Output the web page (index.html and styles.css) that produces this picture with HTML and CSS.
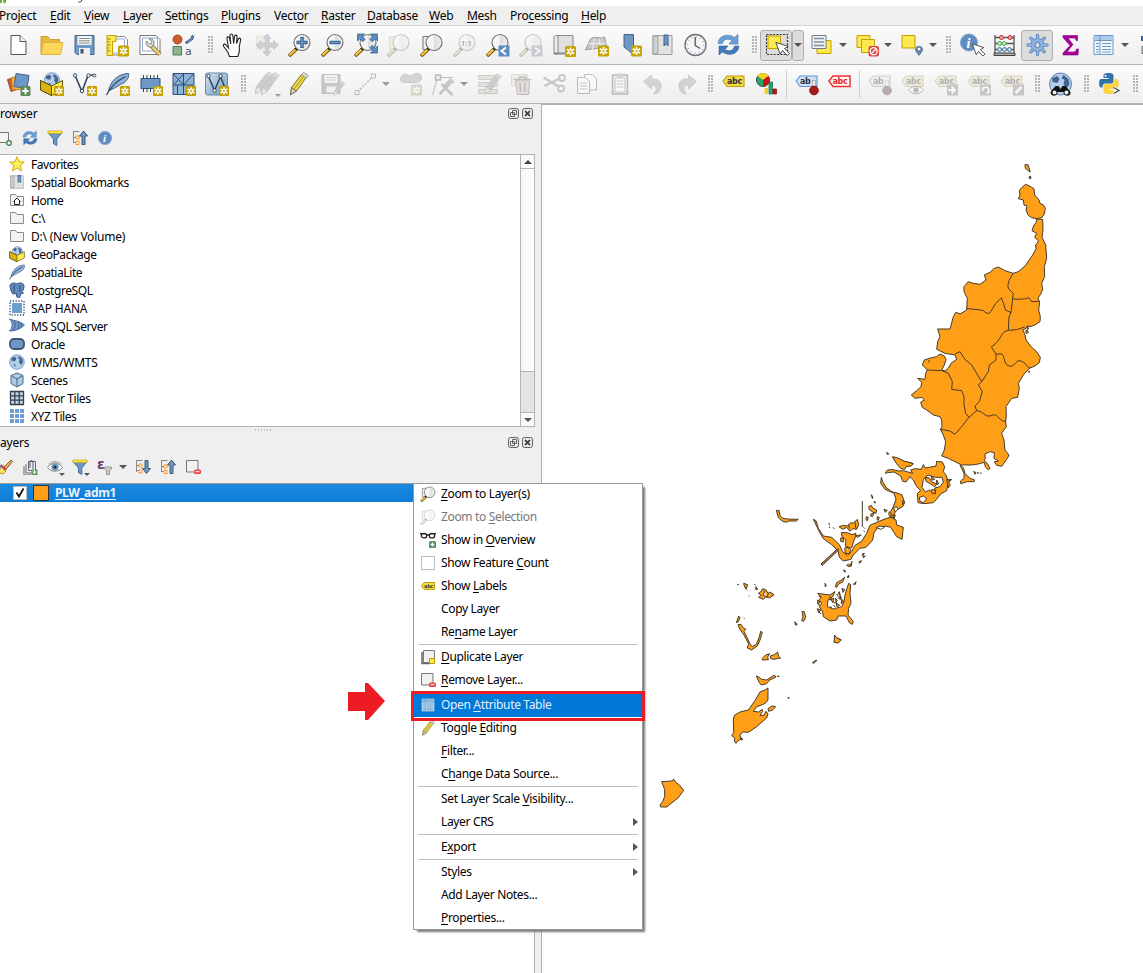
FILE: index.html
```html
<!DOCTYPE html>
<html lang="en">
<head>
<meta charset="utf-8">
<title>QGIS</title>
<link rel="stylesheet" href="styles.css">
</head>
<body>
<svg class="defs" width="0" height="0">
<defs>
<linearGradient id="blueg" x1="0" y1="0" x2="1" y2="1"><stop offset="0" stop-color="#d5e2ee"/><stop offset="1" stop-color="#6d9ac4"/></linearGradient>
<linearGradient id="lens" x1="0" y1="0" x2="1" y2="0"><stop offset="0" stop-color="#fafafa"/><stop offset=".5" stop-color="#f1f1f0"/><stop offset=".52" stop-color="#dededc"/><stop offset="1" stop-color="#efefee"/></linearGradient>
<symbol id="star" viewBox="0 0 12 12"><rect width="11" height="11" x=".5" y=".5" rx="1.500" fill="#c4a000"/><path d="M6 2v8M2.300 3.800l7.400 4.400M2.300 8.200l7.400-4.400" stroke="#fff" stroke-width="1.700"/><circle cx="6" cy="6" r="1" fill="#c4a000"/></symbol>
<symbol id="new" viewBox="0 0 24 24"><path d="M4.500 2.500h9l6 6v13h-15z" fill="#fff" stroke="#555753"/><path d="M13.500 2.500v6h6" fill="#f3f3f3" stroke="#555753"/></symbol>
<symbol id="open" viewBox="0 0 24 24"><path d="M1.500 21V3.500h7l2 3h9.500V9" fill="#e6b93c" stroke="#d0a034"/><path d="M1.500 21.500L4 9.500h19.500l-2.500 12z" fill="#fcd75a" stroke="#e0b040"/></symbol>
<symbol id="save" viewBox="0 0 24 24"><path d="M2.500 2.500h19v19h-17l-2-2z" fill="#6d97c4" stroke="#45658a"/><path d="M5 3h14v9H5z" fill="#f6f6f6"/><path d="M6.500 5.500h11m-11 2.300h11m-11 2.300h11" stroke="#8a8a8a"/><path d="M6.500 15h11v7h-11z" fill="#eeeeec"/><path d="M8 16h3v4.500H8z" fill="#3c5470"/></symbol>
<symbol id="layout" viewBox="0 0 24 24"><path d="M6 3.500h13l3 3V22H6z" fill="#fff" stroke="#888"/><path d="M7 6h12v14H7z" fill="none" stroke="#8fa9d6"/><path d="M1.500 2.500h9v6H7v14H1.500z" fill="#fce94f" stroke="#c4a000"/><path d="M2 6h3M2 9h2M2 12h3M2 15h2M2 18h3" stroke="#907400"/><use href="#star" x="12" y="12" width="12" height="12"/></symbol>
<symbol id="manager" viewBox="0 0 24 24"><path d="M1.500 2.500h16l4 4v15h-20z" fill="#fff" stroke="#777"/><path d="M4 5h15v13H4z" fill="#fff" stroke="#8fa9d6"/><path d="M12 12l9.500 9.500" stroke="#8c7340" stroke-width="4.500"/><path d="M12 12l9.500 9.500" stroke="#e7cf72" stroke-width="2.500"/><path d="M8 8l3 3 2-.5.500-2-3-2.500c3-1 6 1 5 5l-2 3c-4 1-7-2-5.500-6z" fill="#ddd" stroke="#666" stroke-width=".8"/></symbol>
<symbol id="style" viewBox="0 0 24 24"><circle cx="6" cy="6.500" r="4.500" fill="#cd5b2c" stroke="#a64820"/><path d="M13.500 9.500l6-4 1-3 1.500.5-.5 3-6 4.500z" fill="#6d97c4" stroke="#3c5a80"/><path d="M1.500 13.500h8.500v8.500H1.500z" fill="#8ab58f" stroke="#4e7d55"/><text x="13.500" y="22" class="glyph">a</text></symbol>
<symbol id="hand" viewBox="0 0 24 24"><path d="M8 23.500L6.500 19.500 2.300 13.500c-1.300-2.300 1-3.200 2.300-1.500l2.400 3-1.500-9.500c-.2-2 2-2.300 2.500-.3l1.300 5.800L8.500 2.500c0-2 2.500-2 2.800 0l.9 8L13 3.300c.4-1.800 2.700-1.500 2.500.5L15 10.500 16.800 6c.8-1.600 2.900-.8 2.300 1.200L17.800 13.500v5.500l-1.500 4.500z" fill="#fff" stroke="#222" stroke-width="1.100"/></symbol>
<symbol id="panmap" viewBox="0 0 24 24"><path d="M2 3h13v13H2z" fill="#f2e98c" stroke="#c8c48a"/><path d="M12.500 1l4 4.500h-2.500v4.500h5V7.500L24 12l-5 4.500V14h-5v4.500h2.500l-4 4.500-4-4.500H11V14H6.500v2.500L1.500 12l5-4.500V10H11V5.500H8.500z" fill="#7a92ae" stroke="#52687f" stroke-width=".7"/></symbol>
<symbol id="mag" viewBox="0 0 24 24"><path d="M9.500 15.500L1.500 23" stroke="#6b4e12" stroke-width="3.600"/><path d="M8.200 16.400L2 22.200" stroke="#fcc940" stroke-width="2"/><path d="M10.600 14L8 16.500" stroke="#111" stroke-width="3"/><circle cx="14.500" cy="9.500" r="8" fill="url(#lens)" stroke="#777" stroke-width="1.200"/></symbol>
<symbol id="zin" viewBox="0 0 24 24"><use href="#mag"/><path d="M14.500 4v11M9 9.500h11" stroke="#2f5a94" stroke-width="3.400"/><path d="M14.500 5v9M10 9.500h9" stroke="#6d97c4" stroke-width="1.600"/></symbol>
<symbol id="zout" viewBox="0 0 24 24"><use href="#mag"/><path d="M9 9.500h11" stroke="#2f5a94" stroke-width="3.400"/><path d="M10 9.500h9" stroke="#6d97c4" stroke-width="1.600"/></symbol>
<symbol id="zfull" viewBox="0 0 24 24"><use href="#mag"/><path d="M4 1h7L8.700 3.300l3 3-2.400 2.400-3-3L4 8zM24 1v7l-2.300-2.300-3 3-2.400-2.400 3-3L17 1zM24 20h-7l2.300-2.300-3-3 2.400-2.400 3 3L24 13z" fill="#5d8cc0" stroke="#355f93" stroke-width=".8"/></symbol>
<symbol id="zlayer" viewBox="0 0 24 24"><path d="M3.500 3.500h10v13h-10z" fill="#eee" stroke="#777"/><use href="#mag"/></symbol>
<symbol id="zsel" viewBox="0 0 24 24"><path d="M3 3.500h11v13H3z" fill="#efe37a" stroke="#bbb278"/><use href="#mag"/></symbol>
<symbol id="znat" viewBox="0 0 24 24"><use href="#mag"/><text x="8.500" y="12.500" class="glyph-s">1:1</text></symbol>
<symbol id="zlast" viewBox="0 0 24 24"><use href="#mag"/><path d="M13 12.500h11v11H13z" fill="#5d8cc0"/><path d="M20.500 14.500L16 18l4.500 3.500" fill="none" stroke="#fff" stroke-width="2"/></symbol>
<symbol id="znext" viewBox="0 0 24 24"><use href="#mag"/><path d="M13 12.500h11v11H13z" fill="#6a86a8"/><path d="M16.500 14.500L21 18l-4.500 3.500" fill="none" stroke="#fff" stroke-width="2"/></symbol>
<symbol id="newmap" viewBox="0 0 24 24"><path d="M5 2.500h16.500v18H5z" fill="#dfdfdd" stroke="#888a85"/><path d="M2.500 4c0-2 4-2 4 0v17h-4z" fill="#eee" stroke="#888a85"/><path d="M2.500 20.500h14" stroke="#888a85" stroke-width="2"/><use href="#star" x="13" y="12.500" width="12" height="12"/></symbol>
<symbol id="map3d" viewBox="0 0 24 24"><path d="M6 6c5-4 8 1 14-2l2 10c-8 2-12 1-21 3z" fill="#c8c8c6" stroke="#999"/><path d="M4 11c6-2 11 1 17-1M10 5L8 16m7-10l1 10" fill="none" stroke="#f2f2f2"/><use href="#star" x="13" y="12" width="12" height="12"/></symbol>
<symbol id="bm" viewBox="0 0 24 24"><path d="M6.500 1.500h9.500v20l-5-4-4.500-3.500z" fill="#6d97c4" stroke="#45658a"/><use href="#star" x="13" y="12" width="12" height="12"/></symbol>
<symbol id="book" viewBox="0 0 24 24"><path d="M2.500 2.500h19v19h-19z" fill="#e2e2e0" stroke="#a0a29e"/><path d="M2.500 21.500V3h5v17z" fill="#cfcfcd" stroke="#a0a29e"/><path d="M13.500 2h4v11l-2-2.500-2 2.500z" fill="#6d97c4" stroke="#345e93"/></symbol>
<symbol id="clock" viewBox="0 0 24 24"><circle cx="12" cy="12" r="10.500" fill="#f5f5f5" stroke="#6d7073" stroke-width="1.300"/><circle cx="12" cy="12" r="8.300" fill="none" stroke="#9ab" stroke-width="1.500" stroke-dasharray="1 3.345"/><path d="M11.700 4v8.500l5 3" fill="none" stroke="#555" stroke-width="1.300"/></symbol>
<symbol id="refresh" viewBox="0 0 24 24"><path d="M1.500 10.500C2 2 12 0 18 4.500l3.500-3V11h-9l3-3.500C11 5 7 6 6 10.500z" fill="#6c9fd6" stroke="#3f73b0" stroke-width=".6"/><path d="M22.500 13c-.5 8.500-10.500 10.500-16.500 6l-3.500 3v-9h9l-3 3.500c4.500 2.500 8.500 1 9.500-3.500z" fill="#4279ba" stroke="#32639f" stroke-width=".6"/></symbol>
<symbol id="cursor" viewBox="0 0 12 14"><path d="M1 1v10l2.500-2 2.500 4.500 2.200-1.200L6 8h4z" fill="#fff" stroke="#444" stroke-width=".9"/></symbol>
<symbol id="cursorl" viewBox="0 0 14 14"><path d="M.8.800l4 11 2.200-3.400 4.500 4.700 2-2-4.700-4.500 3.500-2z" fill="#fff" stroke="#444" stroke-width=".9"/></symbol>
<symbol id="select" viewBox="0 0 24 24"><path d="M2 1.500h21v20H2z" fill="none" stroke="#333" stroke-width="1.200" stroke-dasharray="2 1.300"/><path d="M3.500 3h12.500v12.500H3.500z" fill="#fce94f" stroke="#c4a000"/><use href="#cursorl" x="10.500" y="8.500" width="15" height="15"/></symbol>
<symbol id="selform" viewBox="0 0 24 24"><path d="M6.500 7.500h14v13h-14z" fill="#fce94f" stroke="#c4a000"/><path d="M1.500 2.500h14v13h-14z" fill="#eef1f4" stroke="#707c88"/><path d="M3.500 5.500h10M3.500 9h10M3.500 12.500h10" stroke="#8091a5" stroke-width="1.600"/></symbol>
<symbol id="desel" viewBox="0 0 24 24"><path d="M1.500 2.500h13v12h-13z" fill="#fce94f" stroke="#c4a000"/><path d="M6 6.500h13v13H6z" fill="#fce94f" stroke="#c4a000"/><rect x="13" y="13" width="10.500" height="10.500" rx="2" fill="#e04848"/><circle cx="18.200" cy="18.200" r="3.500" fill="none" stroke="#fff" stroke-width="1.300"/><path d="M16 20.500l4.500-4.500" stroke="#fff" stroke-width="1.300"/></symbol>
<symbol id="selloc" viewBox="0 0 24 24"><path d="M1.500 2.500h13v12.500h-13z" fill="#fce94f" stroke="#c4a000"/><path d="M18.500 22.500c-3-4-4-5-3.500-7 .8-3 6.200-3 7 0 .5 2-.5 3-3.500 7z" fill="#6885a2" stroke="#4e6a88" stroke-width=".6"/><circle cx="18.500" cy="16" r="1.300" fill="#fff"/></symbol>
<symbol id="ident" viewBox="0 0 24 24"><circle cx="9.500" cy="9.500" r="8.500" fill="#5f8dc2" stroke="#7fa3cc"/><text x="7" y="14.500" class="glyph-i">i</text><use href="#cursorl" x="12" y="10" width="14" height="14"/></symbol>
<symbol id="abacus" viewBox="0 0 24 24"><path d="M2.500 2v20M21.500 2v20M2 4.500h20M2 10.500h20M2 16.500h20" stroke="#555" stroke-width="1.300"/><path d="M1.500 20h21v2.500h-21z" fill="#aaa" stroke="#444"/><g stroke-width="1"><g fill="#f7a6a6" stroke="#c22"><circle cx="9" cy="4.500" r="2"/><circle cx="17.500" cy="4.500" r="2"/></g><g fill="#c9efc9" stroke="#4a4"><circle cx="7" cy="10.500" r="2"/><circle cx="11.500" cy="10.500" r="2"/></g><g fill="#c4dcf2" stroke="#4479a8"><circle cx="7" cy="16.500" r="2"/><circle cx="12" cy="16.500" r="2"/><circle cx="17" cy="16.500" r="2"/></g></g></symbol>
<symbol id="gear" viewBox="0 0 24 24"><g stroke="#5a8ac6" stroke-width="3.400" stroke-linecap="round"><path d="M12 2.500v19M2.500 12h19M5.300 5.300l13.400 13.400M5.300 18.700L18.700 5.300"/></g><circle cx="12" cy="12" r="6.500" fill="#8db2dd" stroke="#5a8ac6"/><g stroke="#8db2dd" stroke-width="1.800" stroke-linecap="round"><path d="M12 2.500v19M2.500 12h19M5.300 5.300l13.400 13.400M5.300 18.700L18.700 5.300"/></g><circle cx="12" cy="12" r="2.600" fill="#dcdcdc" stroke="#4a7cba"/></symbol>
<symbol id="sigma" viewBox="0 0 24 24"><path d="M4.500 2.500h14.500v5h-1.500c-.3-2-1-2.500-3-2.500H9.500l5 6.500-6 7.500h6.500c2 0 2.700-1 3-3H20l-.5 6H4.500v-2l7-7.500-7-8z" fill="#a8009e" stroke="#800078" stroke-width=".6"/></symbol>
<symbol id="table" viewBox="0 0 24 24"><path d="M2.500 2.500h19v19h-19z" fill="#f4f8fc" stroke="#6d97c4"/><path d="M3 3h18v4H3z" fill="#a9cdee"/><path d="M3 7.500h18M8.500 3v18" stroke="#6d97c4"/><path d="M4.500 10.500h3m3 0h9m-15 3h3m3 0h9m-15 3h3m3 0h9m-15 2.500h3m3 0h9" stroke="#6d97c4" stroke-width="1.200"/></symbol>
<symbol id="ruler" viewBox="0 0 24 24"><path d="M1 5.500h20M1.500 3v5" stroke="#345e93" stroke-width="2"/><path d="M1.500 13.500h20v7h-20z" fill="#ddd" stroke="#666"/><path d="M5 14v3m3-3v4" stroke="#444"/></symbol>
<symbol id="dsm" viewBox="0 0 24 24"><path d="M1 7.500L13 4l3.500 11.500-12 4z" fill="#d0572a" stroke="#a64820"/><path d="M5 5.500L17 4l1 13-12 1z" fill="#f5b436" stroke="#c08c1c"/><path d="M9.500 1.500l13 2-2 13-13-2z" fill="#6d97c4" stroke="#3f628c"/><rect x="14" y="14" width="10" height="10" rx="1.500" fill="#5a8c5a"/><path d="M19 15.800v6.400M15.800 19h6.400" stroke="#fff" stroke-width="2"/></symbol>
<symbol id="globe" viewBox="0 0 24 24"><circle cx="12" cy="12" r="11" fill="#b4cde8" stroke="#5b82b0"/><path d="M3.500 6l5.500-2 2 3-2 4-5-1zm11.500-3l5 4 1 5-3 5-3-5 1-4-3-2zM7 15l3 1-1 4z" fill="#426590"/></symbol>
<symbol id="gpkg" viewBox="0 0 24 24"><use href="#globe" x="4" y="0" width="17" height="17"/><path d="M1 8.500L12 14l11-5.500V18l-11 5.500L1 18z" fill="#fce94f" stroke="#504508" stroke-width=".9"/><path d="M1 8.500L12 14v9.500L1 18z" fill="#dcb30e" stroke="#504508" stroke-width=".9"/></symbol>
<symbol id="gpkgn" viewBox="0 0 24 24"><use href="#gpkg"/><use href="#star" x="14" y="13.500" width="11" height="11"/></symbol>
<symbol id="shp" viewBox="0 0 24 24"><path d="M2.500 3.500l7 16 6-16L21.500 3" fill="none" stroke="#33475b" stroke-width="1.600"/><g fill="#fff" stroke="#33475b"><circle cx="2.500" cy="3.500" r="1.700"/><circle cx="9.500" cy="19" r="1.700"/><circle cx="16" cy="3.500" r="1.700"/><circle cx="22" cy="3.500" r="1.500"/></g></symbol>
<symbol id="shpn" viewBox="0 0 24 24"><use href="#shp"/><use href="#star" x="14" y="13.500" width="11" height="11"/></symbol>
<symbol id="feather" viewBox="0 0 24 24"><path d="M3 19C5 9 12 2 23 1.500c1 5-3 9-8 11-3 2-7 4-12 6.500z" fill="#8db2d8" stroke="#3f628c"/><path d="M1 23C5 15 11 9 20 4.500" fill="none" stroke="#33475b" stroke-width="1.300"/></symbol>
<symbol id="feathern" viewBox="0 0 24 24"><use href="#feather"/><use href="#star" x="14" y="13.500" width="11" height="11"/></symbol>
<symbol id="chip" viewBox="0 0 24 24"><path d="M5 3v17M8.500 3v17M12 3v17M15.500 3v17M19 3v17" stroke="#2e4258"/><path d="M2.500 6.500h19v10h-19z" fill="#6d97c4" stroke="#33557d"/><use href="#star" x="14" y="13.500" width="11" height="11"/></symbol>
<symbol id="mesh" viewBox="0 0 24 24"><path d="M1.500 1.500h21v21h-21z" fill="#8db2d8" stroke="#2e4c70"/><path d="M2 13h20M12 2v20M2 2l10 11M12 2L2 13m10 0L22 2M6 13v9" stroke="#2e4c70" fill="none"/><use href="#star" x="14" y="13.500" width="11" height="11"/></symbol>
<symbol id="virt" viewBox="0 0 24 24"><rect x="1" y="1" width="22" height="22" rx="2" fill="url(#blueg)" stroke="#6987a6"/><path d="M4 4.500l6 14 6-14 5 13" fill="none" stroke="#33475b" stroke-width="1.500"/><g fill="#fff" stroke="#33475b"><circle cx="4" cy="4" r="1.700"/><circle cx="10" cy="18.500" r="1.700"/><circle cx="16" cy="4" r="1.700"/></g><use href="#star" x="14" y="13.500" width="11" height="11"/></symbol>
<symbol id="pencil" viewBox="0 0 24 24"><path d="M4 22.500l1-7L15 2.500l5 2.500L10 19z" fill="#ead94a" stroke="#85701a"/><path d="M15 3l2-2.500 5 3L20 6z" fill="#ddd" stroke="#888" stroke-width=".7"/><path d="M7.500 17L17.500 4" stroke="#a89423"/><path d="M5 15.500l5 3.500-6 4z" fill="#d2cdbb" stroke="#555" stroke-width=".7"/></symbol>
<symbol id="pencilg" viewBox="0 0 24 24"><path d="M4 22.500l1-7L15 2.500l5 2.500L10 19z" fill="#8a8480" stroke="#77706c"/><path d="M15 3l2-2.500 5 3L20 6z" fill="#b5a5a0" stroke="#888" stroke-width=".7"/><path d="M5 15.500l5 3.500-6 4z" fill="#ddd" stroke="#666" stroke-width=".7"/></symbol>
<symbol id="pencils" viewBox="0 0 24 24"><use href="#pencilg" x="-3" y="-1" width="24" height="24"/><use href="#pencilg" x="3" y="0" width="24" height="24"/></symbol>
<symbol id="savee" viewBox="0 0 24 24"><path d="M1.500 2.500h18v19h-18z" fill="#777" stroke="#666"/><path d="M4 3h13v8H4z" fill="#eee"/><path d="M6 5.500h9M6 8h9" stroke="#888"/><path d="M6 14.500h10v6H6z" fill="#eee"/><use href="#pencilg" x="11" y="9" width="15" height="15"/></symbol>
<symbol id="line" viewBox="0 0 24 24"><path d="M4 20L20 4" stroke="#555" stroke-width="1.500" stroke-dasharray="2 1.500"/><path d="M1.500 18.500h4v4h-4zM18 2h4v4h-4z" fill="#fff" stroke="#555"/></symbol>
<symbol id="blob" viewBox="0 0 24 24"><path d="M4 3c3-3 6 2 10 0 4-3 9-2 9 2.500 0 5-5 5-9 5H7C1 11 1 6 4 3z" fill="#8f9f9f" stroke="#777"/><use href="#star" x="12" y="12" width="12" height="12"/></symbol>
<symbol id="vertex" viewBox="0 0 24 24"><path d="M1 23L6 5.500h15" fill="none" stroke="#555"/><path d="M4 3h5v5H4z" fill="#ddd" stroke="#555" stroke-width="1.500"/><path d="M8 22L19 11M10 12l11 11" stroke="#777" stroke-width="2.500"/><path d="M13 14l6-6 3 3" fill="none" stroke="#777" stroke-width="3"/></symbol>
<symbol id="multi" viewBox="0 0 24 24"><path d="M2 3.500h19v4H2zM2 10.500h19v4H2zM2 17.500h19v4H2z" fill="#c3c98e" stroke="#858a66"/><use href="#pencilg" x="5" y="0" width="22" height="24"/></symbol>
<symbol id="trash" viewBox="0 0 24 24"><path d="M2 2.500h16v11H2z" fill="#e9e5a8" stroke="#aaa"/><path d="M6 9h14l-1 13.500H8z" fill="#e2b4b0" stroke="#8c4a4a"/><path d="M4 7.500h18M10 7V5h6v2M10.500 11l.5 9m4.500-9l-.5 9" fill="none" stroke="#8c4a4a" stroke-width="1.500"/></symbol>
<symbol id="cut" viewBox="0 0 24 24"><path d="M1 5.500l16 9.500M2 14L18 6" stroke="#777" stroke-width="2.500"/><circle cx="19.500" cy="6" r="3" fill="none" stroke="#777" stroke-width="1.800"/><circle cx="18.500" cy="16.500" r="3" fill="none" stroke="#777" stroke-width="1.800"/></symbol>
<symbol id="copy" viewBox="0 0 24 24"><path d="M9 2.500h8l4 4V18H9z" fill="#fff" stroke="#555"/><path d="M2 5.500h8l4 4v12H2z" fill="#fff" stroke="#555"/><path d="M4 11h8m-8 3h8m-8 3h8" stroke="#777"/></symbol>
<symbol id="paste" viewBox="0 0 24 24"><path d="M4 3h15v19H4z" fill="#ddd" stroke="#555" stroke-width="1.500"/><path d="M6.500 6h10v14h-10z" fill="#fff" stroke="#777"/><path d="M8.500 1.500h6v4h-6z" fill="#999"/><path d="M8 9h7m-7 3h7m-7 3h7" stroke="#777"/></symbol>
<symbol id="undo" viewBox="0 0 24 24"><path d="M2 9.500L10 3v4c8-1 12 5 8 12-1 2-3 3-6 3 4-4 4-9-2-9v4z" fill="#a09a86" stroke="#87827a"/></symbol>
<symbol id="redo" viewBox="0 0 24 24"><use href="#undo" transform="matrix(-1 0 0 1 24 0)"/></symbol>
<symbol id="tag" viewBox="0 0 24 24"><path d="M1.500 9l4-5h17v10.500H5.500z" fill="#f3da48" stroke="#c4a000" stroke-width="1.100"/><text x="5.500" y="12" class="tagtxt">abc</text></symbol>
<symbol id="tagm" viewBox="0 0 16 16"><path d="M1.500 8l2.500-3.500h10.500v7H4z" fill="#f3da48" stroke="#c4a000"/><text x="4" y="10" class="tagmini">abc</text></symbol>
<symbol id="tagr" viewBox="0 0 24 24"><path d="M1.500 9l4-5h17v10.500H5.500z" fill="#fff" stroke="#f03030" stroke-width="1.500"/><text x="5" y="12" class="tagtxt red">abc</text></symbol>
<symbol id="tagb" viewBox="0 0 24 24"><path d="M1.500 9l4-5h17v10.500H5.500z" fill="#cfe2f7" stroke="#5e94d4" stroke-width="1.100"/><text x="5.500" y="12" class="tagtxt">ab</text><path d="M18 8.500h3v9h-3z" fill="#eee" stroke="#888" stroke-width=".6"/><circle cx="19.500" cy="18.500" r="4.300" fill="#aa1818" stroke="#7a0d0d"/></symbol>
<symbol id="tageye" viewBox="0 0 24 24"><use href="#tag"/><path d="M8 18c4-5 11-5 15 0-4 5-11 5-15 0z" fill="#fff" stroke="#555"/><circle cx="15.500" cy="18" r="2.700" fill="#555"/></symbol>
<symbol id="tagmv" viewBox="0 0 24 24"><use href="#tag"/><path d="M13.500 12.500h11v11h-11z" fill="#777"/><path d="M15 18h5m-2-3.500l3.500 3.500-3.500 3.500" stroke="#fff" stroke-width="1.800" fill="none"/></symbol>
<symbol id="tagrot" viewBox="0 0 24 24"><use href="#tag"/><path d="M13.500 12.500h11v11h-11z" fill="#777"/><path d="M16 19a3.200 3.200 0 1 1 4 2.500" stroke="#fff" stroke-width="1.800" fill="none"/></symbol>
<symbol id="taged" viewBox="0 0 24 24"><use href="#tag"/><path d="M13.500 12.500h11v11h-11z" fill="#777"/><path d="M16 21l6-6" stroke="#fff" stroke-width="2.500"/></symbol>
<symbol id="diagram" viewBox="0 0 24 24"><circle cx="8.500" cy="8" r="6.500" fill="#22a86a" stroke="#444"/><path d="M8.500 8L3 4C5.500 0 12 0 14 4z" fill="#f7cf24"/><path d="M8.500 8L14 4c3 4 0 10-5.500 10.500z" fill="#c81414"/><path d="M10 16h3.500v6H10z" fill="#f7cf24"/><path d="M14.500 10h3.500v12h-3.500z" fill="#22a86a" stroke="#146b43" stroke-width=".7"/><path d="M18.500 17h3.500v5h-3.500z" fill="#c81414" stroke="#800" stroke-width=".7"/></symbol>
<symbol id="meta" viewBox="0 0 24 24"><use href="#globe"/><path d="M7 14h3l2 3 2-3h3l5 6c1 5-7 5-7 0h-6c0 5-7 5-7 0z" fill="#111"/><circle cx="6" cy="20.500" r="2" fill="#eee"/><circle cx="18" cy="20.500" r="2" fill="#eee"/></symbol>
<symbol id="python" viewBox="0 0 24 24"><path d="M11 1c4 0 5 1 5 3v5c0 2-1 2.500-3 2.500H8c-2 0-3 1-3 4H3.500C1 15.500 1 7 3.500 7H11V6H6V4c0-2 1-3 5-3z" fill="#3572a5"/><circle cx="8" cy="3.700" r="1" fill="#fff"/><path d="M11 22c-4 0-5-1-5-3v-4c0-2 1-3 3-3h5c2 0 3-1 3-5h2c3 0 3 9 0 10h-8v1h5v1c0 2-1 3-5 3z" fill="#fdd23b"/><path d="M16 15.500l5.500 3-5.500 3" fill="none" stroke="#fff" stroke-width="3"/><path d="M16 15.500l5.500 3-5.500 3" fill="none" stroke="#444" stroke-width="1.300"/></symbol>
<symbol id="funnel" viewBox="0 0 16 16"><path d="M1 2.500h14L9.800 9v6.500l-3.300-1.800V9z" fill="#6d97c4" stroke="#456f9f"/><path d="M1 1h14v2.500H1z" fill="#fce94f" stroke="#c4a000" stroke-width=".7"/></symbol>
<symbol id="collapse" viewBox="0 0 16 16"><path d="M1.500 1v12M1.500 1.500h6m-6 6h3m-3 5h3" stroke="#888" fill="none"/><path d="M4 6h3v3H4zM4 11.500h3v3H4z" fill="#fff" stroke="#f7921e"/><path d="M11.500 1l4 5h-2.500v8.500h-3V6H7.500z" fill="#6d97c4" stroke="#3b5877"/></symbol>
<symbol id="expand" viewBox="0 0 16 16"><path d="M1.500 1v12M1.500 1.500h6m-6 5h3m-3 5h3" stroke="#888" fill="none"/><path d="M4 5h3v3H4zM4 11h3v3H4z" fill="#fff" stroke="#f7921e"/><path d="M11.500 14.500l4-5h-2.500V1.500h-3v8H7.500z" fill="#6d97c4" stroke="#3b5877"/></symbol>
<symbol id="info" viewBox="0 0 16 16"><circle cx="8" cy="8" r="6.600" fill="#5f8dc2" stroke="#88a9cf"/><text x="6" y="12" class="glyph-j">i</text></symbol>
<symbol id="addl" viewBox="0 0 16 16"><path d="M1 2.500h10.500v10H1z" fill="#f5f5f5" stroke="#777"/><circle cx="12" cy="13" r="2.300" fill="#fff" stroke="#4c8a57" stroke-width="1.500"/></symbol>
<symbol id="fav" viewBox="0 0 16 16"><path d="M8 .7l2 5 5.300.4-4.100 3.500 1.400 5.300L8 12l-4.600 2.900 1.400-5.300L.7 6.100 6 5.700z" fill="#fdf05c" stroke="#cfa70e"/></symbol>
<symbol id="folder" viewBox="0 0 16 16"><path d="M1.500 13.500v-11h5l1.500 2h6.500v9z" fill="#f2f2f1" stroke="#8a8c88"/></symbol>
<symbol id="home" viewBox="0 0 16 16"><use href="#folder"/><path d="M4.500 9.500L8 6l3.500 3.500M5.500 9v3.500h5V9" fill="#fff" stroke="#222"/></symbol>
<symbol id="pg" viewBox="0 0 16 16"><path d="M1 3c2-3 5-2 7-1 3-2 7-1 7 2 0 3-1 5-2.500 6l2 1-3 1c0 4-1 4-3 3.500-1-.5-1-2-1-4L4 12C2 10 1 6 1 3z" fill="#5f8dc2" stroke="#33557d"/><path d="M5.500 2.500c-1 3 0 5-.5 8M10.500 3c1 3-.5 5 1 7" fill="none" stroke="#2e4c70"/></symbol>
<symbol id="hana" viewBox="0 0 16 16"><path d="M1 1h14v14H1z" fill="none" stroke="#2e4c70" stroke-width="1.500" stroke-dasharray="1.200 1.600"/><path d="M3 3h10v10H3z" fill="#6d9fd2"/></symbol>
<symbol id="mssql" viewBox="0 0 16 16"><path d="M.5 1c4 4 3 9 0 12 6 0 11-2 15-6C11 3 6 3 .5 1z" fill="#6d97c4" stroke="#456f9f"/><path d="M5 2.500c2 4 1 7-1 10M9 3.500c1.500 3 1 5-.5 7.500M12 5c1 2 .5 3-.5 4.500" stroke="#2e4c70" fill="none" stroke-width=".7"/></symbol>
<symbol id="oracle" viewBox="0 0 16 16"><rect x="1" y="3" width="14" height="10" rx="4" fill="#6d97c4" stroke="#3b5877" stroke-width="1.800"/></symbol>
<symbol id="cube" viewBox="0 0 16 16"><path d="M8 1l6 2.500v8L8 15l-6-3.500v-8z" fill="#aecbe6" stroke="#456780"/><path d="M2 3.500L8 7l6-3.500M8 7v8" stroke="#456780" fill="none"/></symbol>
<symbol id="grid" viewBox="0 0 16 16"><path d="M1 1h14v14H1z" fill="#c3d3e3"/><path d="M1.500 1v14M5.800 1v14M10.200 1v14M14.500 1v14M1 1.500h14M1 5.800h14M1 10.200h14M1 14.500h14" stroke="#33404d" stroke-width="1.300"/></symbol>
<symbol id="xyz" viewBox="0 0 16 16"><path d="M1 3h14M1 8h14M1 13h14" stroke="#6d9fd2" stroke-width="4" stroke-dasharray="4 1"/></symbol>
<symbol id="broom" viewBox="0 0 16 16"><path d="M4 8l5 4-3 3-6-2z" fill="#fce94f" stroke="#d0822e"/><path d="M0 3l5 4-2 4-3 1z" fill="#6d97c4"/><path d="M6 9l3-3 5-5 1.500 1.500L11 8l-3 3z" fill="#e3b56c" stroke="#8d5826"/><path d="M4 6l5 5" stroke="#d23c3c" stroke-width="2"/></symbol>
<symbol id="group" viewBox="0 0 16 16"><path d="M6.500 2.500h7v9h-7z M4 5v9h7M2 7v9h7" fill="none" stroke="#666"/><path d="M8 9V3c0-2 3-2 3 0v7" fill="none" stroke="#345e93"/><path d="M9.500 10.500h6v6h-6z" fill="#5a9c5a"/><path d="M12.500 11v4M10.500 13h4" stroke="#fff"/></symbol>
<symbol id="eye" viewBox="0 0 16 16"><path d="M.5 8.500c4-6 11-6 15 0-4 5-11 5-15 0z" fill="#fff" stroke="#888"/><circle cx="8" cy="8" r="3.700" fill="#6d97c4"/><circle cx="8" cy="8" r="1.500" fill="#223"/><path d="M1 5.500c4-4 10-4 14 0" fill="none" stroke="#aaa"/></symbol>
<symbol id="eps" viewBox="0 0 16 16"><text x="0" y="10" class="eps">ε</text><path d="M7.500 8h7v2l-2 1.500v4h-3v-4l-2-1.500z" fill="#ccc" stroke="#999"/></symbol>
<symbol id="rem" viewBox="0 0 16 16"><path d="M1.500 1.500h11.500v11.500H1.500z" fill="#f1f1f0" stroke="#777"/><rect x="9" y="10.500" width="7" height="4.500" rx="1.500" fill="#e8474a"/><path d="M10.500 12.700h4" stroke="#fff"/></symbol>
<symbol id="dup" viewBox="0 0 16 16"><path d="M2 3v11.500h8" fill="none" stroke="#666" stroke-width="1.500"/><path d="M3.500 1.500h11v12h-11z" fill="#f1f1f0" stroke="#777"/><path d="M9.500 9.500h5v5h-5z" fill="#fce94f" stroke="#c4a000"/></symbol>
<symbol id="glasses" viewBox="0 0 16 16"><path d="M0 1.500l2 .5M16 1.500L14 2M6.500 3h3" fill="none" stroke="#222" stroke-width="1.300"/><ellipse cx="4" cy="3.700" rx="2.700" ry="2.200" fill="#fff" stroke="#222" stroke-width="1.300"/><ellipse cx="12" cy="3.700" rx="2.700" ry="2.200" fill="#fff" stroke="#222" stroke-width="1.300"/><rect x="9" y="9" width="7" height="7" rx="1.500" fill="#4f8f5a"/><path d="M12.500 10.500v4M10.500 12.500h4" stroke="#fff" stroke-width="1.400"/></symbol>
<symbol id="check" viewBox="0 0 16 16"><path d="M1.500 1.500h13v13h-13z" fill="#fff" stroke="#bbb"/></symbol>
<symbol id="float" viewBox="0 0 11 11"><rect x=".6" y=".6" width="9.800" height="9.800" rx="1.800" fill="#f4f4f4" stroke="#555"/><path d="M4.500 2.500h4v4h-4zM2.500 4.500h4v4h-4z" fill="#f4f4f4" stroke="#555" stroke-width=".9"/></symbol>
<symbol id="close" viewBox="0 0 11 11"><rect x=".6" y=".6" width="9.800" height="9.800" rx="1.800" fill="#f4f4f4" stroke="#555"/><path d="M3 3l5 5m0-5L3 8" stroke="#444" stroke-width="1.800"/></symbol>
</defs>
</svg>

<div class="app">
  <div class="titlebar"><svg width="260" height="6"><path d="M0 0h2v3H0zM3 0h3v2l-2 2z" fill="#5cb03c"/><path d="M82 0l-1.500 2h-2" fill="none" stroke="#333"/></svg></div>
  <nav class="menubar">
    <span>Project</span><span><u>E</u>dit</span><span><u>V</u>iew</span><span><u>L</u>ayer</span><span><u>S</u>ettings</span><span><u>P</u>lugins</span><span>Vect<u>o</u>r</span><span><u>R</u>aster</span><span><u>D</u>atabase</span><span><u>W</u>eb</span><span><u>M</u>esh</span><span>Pro<u>c</u>essing</span><span><u>H</u>elp</span>
  </nav>
  <div class="toolbar">
    <svg class="tb"><use href="#new"/></svg><svg class="tb"><use href="#open"/></svg><svg class="tb"><use href="#save"/></svg><svg class="tb"><use href="#layout"/></svg><svg class="tb"><use href="#manager"/></svg><svg class="tb"><use href="#style"/></svg>
    <i class="grip g17"></i>
    <svg class="tb"><use href="#hand"/></svg><svg class="tb off"><use href="#panmap"/></svg><svg class="tb"><use href="#zin"/></svg><svg class="tb"><use href="#zout"/></svg><svg class="tb"><use href="#zfull"/></svg><svg class="tb off"><use href="#zsel"/></svg><svg class="tb"><use href="#zlayer"/></svg><svg class="tb off"><use href="#znat"/></svg><svg class="tb"><use href="#zlast"/></svg><svg class="tb off"><use href="#znext"/></svg><svg class="tb"><use href="#newmap"/></svg><svg class="tb"><use href="#map3d"/></svg><svg class="tb"><use href="#bm"/></svg><svg class="tb"><use href="#book"/></svg><svg class="tb"><use href="#clock"/></svg><svg class="tb"><use href="#refresh"/></svg>
    <i class="grip g15"></i>
    <span class="pressed"><svg class="tb"><use href="#select"/></svg></span><span class="pressed drop"><b class="tri"></b></span>
    <span class="split first"><svg class="tb"><use href="#selform"/></svg><b class="tri"></b></span>
    <span class="split"><svg class="tb"><use href="#desel"/></svg><b class="tri"></b></span>
    <span class="split"><svg class="tb"><use href="#selloc"/></svg><b class="tri"></b></span>
    <i class="grip g14"></i>
    <svg class="tb"><use href="#ident"/></svg><svg class="tb"><use href="#abacus"/></svg><span class="pressed gearbtn"><svg class="tb"><use href="#gear"/></svg></span><svg class="tb"><use href="#sigma"/></svg><svg class="tb"><use href="#table"/></svg><b class="tri tabletri"></b><svg class="tb"><use href="#ruler"/></svg>
  </div>
  <div class="toolbar">
    <svg class="tb"><use href="#dsm"/></svg><svg class="tb"><use href="#gpkgn"/></svg><svg class="tb"><use href="#shpn"/></svg><svg class="tb"><use href="#feathern"/></svg><svg class="tb"><use href="#chip"/></svg><svg class="tb"><use href="#mesh"/></svg><svg class="tb"><use href="#virt"/></svg>
    <i class="grip g17"></i>
    <span class="corner"><svg class="tb off"><use href="#pencils"/></svg><b class="tri sm"></b></span><svg class="tb shl"><use href="#pencil"/></svg><svg class="tb off"><use href="#savee"/></svg>
    <span class="split dim"><svg class="tb off"><use href="#line"/></svg><b class="tri"></b></span>
    <svg class="tb off"><use href="#blob"/></svg>
    <span class="split dim"><svg class="tb off"><use href="#vertex"/></svg><b class="tri"></b></span>
    <svg class="tb off"><use href="#multi"/></svg><svg class="tb off"><use href="#trash"/></svg><svg class="tb off"><use href="#cut"/></svg><svg class="tb off"><use href="#copy"/></svg><svg class="tb off"><use href="#paste"/></svg><svg class="tb off"><use href="#undo"/></svg><svg class="tb off"><use href="#redo"/></svg>
    <i class="grip g14"></i>
    <svg class="tb"><use href="#tag"/></svg><svg class="tb"><use href="#diagram"/></svg><i class="vsep"></i><svg class="tb"><use href="#tagb"/></svg><svg class="tb"><use href="#tagr"/></svg><i class="vsep"></i>
    <svg class="tb off"><use href="#tagb"/></svg><svg class="tb off"><use href="#tageye"/></svg><svg class="tb off"><use href="#tagmv"/></svg><svg class="tb off"><use href="#tagrot"/></svg><svg class="tb off"><use href="#taged"/></svg>
    <i class="grip g16"></i><svg class="tb"><use href="#meta"/></svg><i class="grip g16"></i><svg class="tb"><use href="#python"/></svg><i class="grip g16"></i>
  </div>

  <div class="main">
    <aside class="docks">
      <section class="dock browser">
        <header><span>rowser</span><svg class="wb"><use href="#float"/></svg><svg class="wb"><use href="#close"/></svg></header>
        <div class="minibar"><svg class="ic"><use href="#addl"/></svg><svg class="ic"><use href="#refresh"/></svg><svg class="ic"><use href="#funnel"/></svg><svg class="ic"><use href="#collapse"/></svg><svg class="ic"><use href="#info"/></svg></div>
        <div class="listbox">
          <ul>
            <li><svg class="ic"><use href="#fav"/></svg>Favorites</li>
            <li><svg class="ic"><use href="#book"/></svg>Spatial Bookmarks</li>
            <li><svg class="ic"><use href="#home"/></svg>Home</li>
            <li><svg class="ic"><use href="#folder"/></svg>C:\</li>
            <li class="wide"><svg class="ic"><use href="#folder"/></svg>D:\ (New Volume)</li>
            <li><svg class="ic"><use href="#gpkg"/></svg>GeoPackage</li>
            <li><svg class="ic"><use href="#feather"/></svg>SpatiaLite</li>
            <li><svg class="ic"><use href="#pg"/></svg>PostgreSQL</li>
            <li class="wide"><svg class="ic"><use href="#hana"/></svg>SAP HANA</li>
            <li><svg class="ic"><use href="#mssql"/></svg>MS SQL Server</li>
            <li><svg class="ic"><use href="#oracle"/></svg>Oracle</li>
            <li class="wide"><svg class="ic"><use href="#globe"/></svg>WMS/WMTS</li>
            <li><svg class="ic"><use href="#cube"/></svg>Scenes</li>
            <li><svg class="ic"><use href="#grid"/></svg>Vector Tiles</li>
            <li><svg class="ic"><use href="#xyz"/></svg>XYZ Tiles</li>
          </ul>
          <div class="scroll"><span class="sbtn"><b class="tri up"></b></span><span class="thumb"></span><span class="track"></span><span class="sbtn"><b class="tri"></b></span></div>
        </div>
      </section>
      <div class="splitter"><i></i></div>
      <section class="dock layers">
        <header><span>ayers</span><svg class="wb"><use href="#float"/></svg><svg class="wb"><use href="#close"/></svg></header>
        <div class="minibar lay"><svg class="ic"><use href="#broom"/></svg><svg class="ic"><use href="#group"/></svg><span class="corner"><svg class="ic"><use href="#eye"/></svg><b class="tri sm"></b></span><span class="corner"><svg class="ic"><use href="#funnel"/></svg><b class="tri sm"></b></span><svg class="ic"><use href="#eps"/></svg><b class="tri"></b><svg class="ic"><use href="#expand"/></svg><svg class="ic"><use href="#collapse"/></svg><svg class="ic"><use href="#rem"/></svg></div>
        <div class="tree"><div class="layer"><span class="cb"><svg width="12" height="12"><path d="M2.500 5.500l2.500 4L9.500 1.500" fill="none" stroke="#111" stroke-width="1.800"/></svg></span><span class="sw"></span><span class="lname">PLW_adm1</span></div></div>
      </section>
    </aside>
    <div class="canvas">
      <svg class="map" viewBox="542 105 601 868">
        <g transform="translate(890 150) scale(.33333)">
          <path d="M405 44h9l3 10 4 12-7-5-8-6zM418 79h4l1 6-5 1z"/>
          <path d="M407 103L417 107 432 116 434 135 447 150 450 160 460 165 466 175 463 192 455 203 440 206 425 203 415 196 408 180 411 168 402 165 400 150 385 146 390 135 388 122 395 113z"/>
          <path d="M440 207L458 208 459 240 456 262 467 285 470 325 463 350 464 380 455 400 458 418 452 432 444 445 449 455 446 480 451 500 450 515 435 525 420 530 412 527 408 535 398 540 404 550 408 570 425 592 440 605 451 622 448 638 435 648 418 655 400 675 385 700 388 715 383 742 365 745 348 770 349 795 347 815 349 830 335 850 342 870 345 900 357 915 352 925 345 935 335 949 320 946 313 935 325 933 312 925 313 908 300 905 285 912 286 925 283 932 292 940 300 955 295 960 286 950 283 937 265 942 245 945 215 945 195 935 175 925 155 918 163 900 167 875 160 855 151 838 156 830 155 810 150 800 130 795 110 780 97 772 92 757 103 750 95 742 75 745 64 735 80 722 93 710 95 697 83 685 105 688 107 670 112 660 97 645 103 630 118 625 140 620 150 612 163 618 168 628 163 645 155 660 165 663 175 655 183 640 200 628 195 615 165 610 140 598 143 575 150 560 143 537 160 537 180 537 190 500 197 487 210 492 230 480 232 445 222 425 222 410 235 395 250 400 270 403 288 390 283 375 300 367 312 356 325 351 345 362 370 370 385 365 405 348 428 315 438 297 437 285 446 273 434 262 440 250 426 242 432 225 438 218z"/>
          <path class="ln" d="M370 370C355 390 350 410 357 418L370 430 368 446C390 450 410 446 416 443L425 455 447 454M368 446L363 488 357 500 355 541 380 539 404 531M230 475C250 480 260 476 280 482Q297 500 305 480T334 444Q342 460 346 480L363 488M355 541C330 545 340 565 304 591L318 612 336 612C345 620 340 640 355 647 375 655 375 630 390 632 405 635 410 650 420 655M318 612L318 630 298 645 295 665 275 695 245 645 225 628 210 605 195 612M275 695L265 705 277 725 268 755 255 768 260 782C285 785 280 800 300 798 325 785 320 810 347 815M112 660L155 662 175 670 187 695 185 718 215 722 222 740 222 765 227 790 237 802 260 782M237 802L215 830 195 853 180 843 151 838"/>
          <path d="M413 530l3 6-5 2zM407 541l6 1 2 6-6 2zM416 664h3v3h-3zM8 922l20 6 15 6 25 6-5 7-18 2-5 7-20-18zM250 963l5 6m6-3l4 5m7-4v3M115 630l4 4-3 4"/>
        </g>
        <g transform="translate(770 440) scale(.33333)">
          <path d="M350 37l6 4-3 4zM368 50L384 54 404 64 430 71 424 78 409 79 404 88 392 85 378 69zM346 100L351 91 365 88 385 93 400 92 428 100 422 90 434 86 454 88 460 74 466 84 498 78 500 64 517 66 524 80 520 95 528 105 533 120 545 118 534 130 530 152 512 162 500 178 490 188 462 191 444 188 442 160 452 152 440 140 430 120 420 110 408 126 398 124 392 108 372 96 352 98zM570 75L580 83 585 101 600 115 614 120 612 125 592 125 572 131 572 123 582 115 582 100zM612 96l5 1-2 6zM622 100l4-1m5-1l3 3"/>
          <path class="hole" d="M460 118L474 105 496 112 516 112 520 126 510 140 494 144 496 162 478 150 466 156 456 142zM448 172l12-4 10 8-10 12-10-4z"/>
          <path d="M466 112l12 2 8 12 14 6-6 8-12-8-14-8zM484 108l10 10-8 2zM500 120l6 12-6 2zM486 148l12 4-6 10-8-4zM530 118l10 4-4 6 5 6-6 10z"/>
          <path d="M334 112L332 130 345 148 372 160 378 178 370 200 362 215 362 232 372 232 376 212 398 200 404 188 396 165 384 160 365 155 348 142 338 125z"/>
          <path d="M325 245L350 235 362 232 378 240 380 255 400 262 396 298 380 290 362 262 345 258 322 264 312 278 308 300 288 322 270 325 250 345 243 358 220 363 208 352 204 332 185 314 160 296 148 275 130 238 138 242 145 265 160 288 185 292 208 314 218 335 232 346 244 335 255 316 275 304 290 280 300 256z"/>
          <path class="hole" d="M318 263l12-5 14 3-10 7zM370 203l10-3 4 8-8 8z"/>
          <path d="M296 200l8-4 4 8 12 6-2 10-8-3-12-8zM322 230l6 2-4 10-3-5zM342 208l10 3-6 6zM358 215l6 6-2 12-6-10zM303 222l10-4-6 12-5-2zM304 164l5 8-2 4zM313 183l4 5-4 1zM289 230l6 2-3 10-4-3zM368 224l8 2-4 10zM398 182l6 4-6 8z"/>
          <path d="M207 260L221 256 232 258 242 248 250 250 262 238 266 254 260 268 248 266 240 274 230 262 218 268zM214 278L232 278 246 284 258 280 256 292 250 306 246 322 236 325 226 318 228 300 216 290zM212 294h8v12l-8-2zM224 324l10-4 8 8-4 14-12-2zM258 287l16-2-12 7zM277 183v78M176 248l3 8m-2 5l4 3m12 3l-4-5M283 340l-5 8-1-6zM286 348l-6 6-1-5zM275 362l-6 8-2-5zM230 376l6-4 4 6 6-14-2 14-8 2zM220 390l6 2-1 5zM233 410l4-2-2 6zM281 262l4 4m-4 6l3 4M254 244l4 22M236 252l2 14"/>
          <path class="wood" d="M153 372l50-46 4 3-50 47z"/>
          <path d="M19 211h8l4 18 8 6 14 2 32 1-6 5-22 0-10 4-12-5-10-9zM0 460l12 4-10 4zM96 514l7 1 4 17-6 12-6-2 4-12zM74 545l8 8-5 3zM193 585l8 9 11 5-16 2z"/>
          <path d="M143 460L157 462 180 465 195 455 188 470 174 480 172 500 190 507 215 500 222 485 226 460 236 430 242 434 240 460 243 490 236 505 234 525 250 545 247 553 238 548 228 528 205 528 200 540 180 543 160 530 158 515 148 500 155 490 146 480 154 472z"/>
          <path d="M196 440l4-12 14-8 10-8-6 14-12 6-6 10zM165 430l4 6-3 5zM232 410l4-4-1 8zM250 433l8-8-2 8zM216 445l8 4-5 8zM208 455l-4 6 7 6-6 8 8 3zM183 480l8-6-2 14zM196 475l6 6-5 7 12 8-8 4zM215 478l6 5-7 8zM190 495l6 7m-15-3l6 6M143 480l8 6-8 6zM142 506l10 4-6 8zM180 470l6 6-8 4zM200 462l4 8m-14 16l6 4m14-20l6 4M146 468l6 4m-8 22l8 2m-6 20l8 6"/>
        </g>
        <g transform="translate(640 570) scale(.33333)">
          <path d="M292 43l5 1m14-4l12 4-5 14-5-10zM322 60l2 2m2 15l3 3M343 43l4 2m1 5l5 8h-6zM355 70L362 66 368 56 378 60 384 70 390 66 402 74 388 84 378 80 370 88 356 82 364 76zM374 62l-4 14 10 4m6-10l-6 12M296 138l4 5-5 12-6 3zM311 144l3 2M294 164L303 163 308 172 318 178 312 184 322 204 330 222 338 230 350 222 358 200 362 184 367 187 360 210 352 228 335 240 322 234 326 222 312 195 300 178z"/>
          <path d="M367 265L377 255 389 251 383 261 385 269 367 270zM391 258L403 254 413 246 416 260 422 264 402 268 392 266zM349 318L355 320 365 328 379 330 393 322 403 315 408 321 388 331 380 341 364 345 358 338zM413 318h4v2h-4zM517 278l10-7h4l-10 9zM444 382l4 2-3 2zM584 197l8 8 12 5-10 9-12-2z"/>
          <path d="M283 436L300 426 325 420 345 392 360 366 375 360 384 354 384 390 378 398 370 403 350 410 340 424 356 426 366 418 368 424 360 436 372 436 378 424 384 432 380 444 350 470 325 487 308 486 300 495 302 508 294 512 288 520 283 514 284 504 275 497 281 488 280 450zM384 416L395 408 407 410 398 420 386 424z"/>
          <path d="M303 503l6 5-6 2zM65 635L95 633 102 628 106 636 118 645 131 661 115 683 80 711 62 711 60 705 68 695 74 680 74 658z"/>
        </g>
      </svg>
    </div>
  </div>

  <svg class="arrow" width="38" height="38" viewBox="0 0 38 38"><path d="M0 9h17V0h3l17 18-17 19h-3v-9H0z" fill="#ed1c24"/></svg>
  <div class="ctx">
    <div class="mi"><svg class="ic"><use href="#zlayer"/></svg><span><u>Z</u>oom to Layer(s)</span></div>
    <div class="mi dis"><svg class="ic off"><use href="#zlayer"/></svg><span>Zoom to <u>S</u>election</span></div>
    <div class="mi"><svg class="ic"><use href="#glasses"/></svg><span>Show in <u>O</u>verview</span></div>
    <div class="mi"><svg class="ic"><use href="#check"/></svg><span>Show Feature <u>C</u>ount</span></div>
    <div class="mi"><svg class="ic"><use href="#tagm"/></svg><span>Show <u>L</u>abels</span></div>
    <div class="mi"><i class="ic"></i><span>Copy Layer</span></div>
    <div class="mi"><i class="ic"></i><span>Re<u>n</u>ame Layer</span></div>
    <div class="ms"></div>
    <div class="mi"><svg class="ic"><use href="#dup"/></svg><span><u>D</u>uplicate Layer</span></div>
    <div class="mi"><svg class="ic"><use href="#rem"/></svg><span><u>R</u>emove Layer...</span></div>
    <div class="ms"></div>
    <div class="mi hot"><svg class="ic"><use href="#table"/></svg><span>Open <u>A</u>ttribute Table</span></div>
    <div class="mi"><svg class="ic"><use href="#pencil"/></svg><span>Toggle <u>E</u>diting</span></div>
    <div class="mi"><i class="ic"></i><span><u>F</u>ilter...</span></div>
    <div class="mi"><i class="ic"></i><span>C<u>h</u>ange Data Source...</span></div>
    <div class="ms"></div>
    <div class="mi"><i class="ic"></i><span>Set Layer Scale <u>V</u>isibility...</span></div>
    <div class="mi sub"><i class="ic"></i><span>Layer CRS</span></div>
    <div class="ms"></div>
    <div class="mi sub"><i class="ic"></i><span>E<u>x</u>port</span></div>
    <div class="ms"></div>
    <div class="mi sub"><i class="ic"></i><span>Styles</span></div>
    <div class="mi"><i class="ic"></i><span>Add Layer Notes...</span></div>
    <div class="mi"><i class="ic"></i><span><u>P</u>roperties...</span></div>
  </div>
  <div class="redframe"></div>
</div>
</body>
</html>
```
FILE: styles.css
```css
* { box-sizing: border-box; }
html, body { margin: 0; }
body { width: 1143px; height: 973px; overflow: hidden; background: #efefef; color: #000; font: 12px/18px "Noto Sans", "Open Sans", sans-serif; letter-spacing: -0.36px; }
.defs { display: block; height: 0; position: absolute; }
.app { position: relative; width: 1143px; height: 973px; display: flex; flex-direction: column; overflow: hidden; }
u { text-decoration: underline; text-underline-offset: 2px; text-decoration-thickness: 1px; text-decoration-skip-ink: none; }

.titlebar { height: 6px; background: #fff; flex: none; }
.titlebar svg { display: block; }
.menubar { height: 19px; flex: none; display: grid; grid-template-columns: 50px 34px 39px 42px 56px 53px 47px 46px 62px 38px 43px 71px 60px; line-height: 20px; white-space: nowrap; letter-spacing: -0.28px; }
.menubar span:first-child { margin-left: -1px; }

.toolbar { height: 39px; flex: none; display: flex; align-items: center; padding-left: 2px; background: linear-gradient(#fbfbfb, #eeeeee); border-top: 1px solid #d2d2d2; white-space: nowrap; overflow: hidden; }
.toolbar + .toolbar { height: 40px; border-top-color: #b4b4b4; border-bottom: 1px solid #b4b4b4; }
.tb { width: 33px; height: 24px; flex: none; display: block; }
.tb.shl { margin: 0 1px 0 -1px; }
.off { opacity: .36; filter: grayscale(.7); }
.grip { flex: none; height: 18px; display: flex; justify-content: flex-end; padding-right: 4px; }
.grip::after { content: ""; width: 5px; height: 18px; background: radial-gradient(circle at 1px 1px, #b5b5b5 .8px, transparent 1px) 0 0 / 3px 3px; }
.g17 { width: 17px; }
.g16 { width: 16px; }
.g15 { width: 15px; padding-right: 3px; }
.g14 { width: 14px; }
.tri { width: 0; height: 0; flex: none; border: 4px solid transparent; border-top-color: #555; border-bottom: 0; }
.tri.up { border-top: 0; border-bottom: 4px solid #444; }
.tri.sm { position: absolute; right: 2px; bottom: -1px; border-width: 3px 3px 0; }
.pressed { width: 32px; height: 31px; display: flex; align-items: center; justify-content: center; background: #dcdcdc; border: 1px solid #adadad; border-radius: 3px; flex: none; }
.pressed.drop { width: 12px; }
.gearbtn { margin: 0 1px 0 0; }
.split { width: 45px; flex: none; display: flex; align-items: center; }
.split .tb { width: 33px; }
.split.first { margin-left: 2px; }
.dim .tri, .corner .off + .tri { border-top-color: #999; }
.tabletri { margin: 0 7px 0 1px; }
.corner { position: relative; display: flex; flex: none; }
.vsep { width: 1px; height: 28px; margin: 0 3px; background: #cfcfcf; flex: none; }

.glyph { font: 11px "DejaVu Sans", sans-serif; fill: #555; }
.glyph-s { font: bold 7.500px "Open Sans", sans-serif; fill: #444; letter-spacing: 0; }
.glyph-i { font: italic bold 14px "Liberation Serif", serif; fill: #fff; }
.glyph-j { font: italic bold 11px "Liberation Serif", serif; fill: #fff; }
.tagtxt { font: bold 8px "DejaVu Sans", sans-serif; fill: #333; letter-spacing: -.3px; }
.tagtxt.red { fill: #e81c1c; }
.tagmini { font: bold 5px "DejaVu Sans", sans-serif; fill: #333; letter-spacing: -.2px; }
.eps { font: bold 14px "DejaVu Sans", sans-serif; fill: #6b3a72; }

.main { flex: 1; display: flex; min-height: 0; }
.docks { width: 541px; flex: none; display: flex; flex-direction: column; }
.dock { display: flex; flex-direction: column; width: 535px; }
.dock header { height: 19px; display: flex; align-items: center; gap: 3px; padding-right: 2px; letter-spacing: -.2px; }
.dock header span { flex: 1; }
.wb { width: 11px; height: 11px; }
.browser { height: 323px; flex: none; }
.minibar { height: 31px; display: flex; align-items: center; gap: 9px; margin-left: -3px; padding-bottom: 2px; }
.ic { width: 16px; height: 16px; flex: none; display: block; }
.listbox { flex: 1; display: flex; border: 1px solid #b4b4b4; border-left: 0; background: #fff; }
.listbox ul { flex: 1; margin: 1px 0 0; padding: 0; list-style: none; letter-spacing: -.42px; }
.listbox li { height: 18px; display: flex; align-items: center; gap: 6px; padding-left: 9px; }
.listbox li.wide { letter-spacing: -.22px; }
.listbox li .ic { position: relative; top: -1px; }
.scroll { width: 14px; display: flex; flex-direction: column; border-left: 1px solid #b4b4b4; }
.sbtn { height: 13px; display: flex; align-items: center; justify-content: center; background: #fafafa; }
.thumb { height: 204px; background: linear-gradient(90deg, #f4f4f4, #fff); border: solid #b4b4b4; border-width: 1px 0; }
.track { flex: 1; background: #e4e4e4; border-bottom: 1px solid #b4b4b4; }
.splitter { height: 6px; display: flex; justify-content: center; align-items: center; flex: none; width: 526px; }
.splitter i { width: 17px; height: 2px; background: repeating-linear-gradient(90deg, #bbb 0 1px, transparent 1px 3px); }
.layers { flex: 1; }
.lay .tri:not(.sm) { margin: 0 -1px 0 -3px; }
.lay .corner .sm { right: -2px; }
.tree { flex: 1; background: #fff; border-top: 1px solid #999; border-right: 1px solid #b4b4b4; }
.layer { height: 18px; display: flex; align-items: center; background: linear-gradient(#1b89dd, #0f7cd6); }
.cb { width: 14px; height: 14px; margin-left: 13px; border: 1px solid #bbb; background: #fff; }
.cb svg { display: block; }
.sw { width: 16px; height: 16px; margin: 0 6px; border: 1px solid #333; background: #ff9f17; }
.lname { color: #e8f3fc; font-weight: bold; letter-spacing: -.35px; text-decoration: underline; text-underline-offset: 2px; text-decoration-skip-ink: none; line-height: 16px; padding-bottom: 1px; }

.canvas { flex: 1; background: #fff; border-left: 1px solid #b0b0b0; border-top: 1px solid #b0b0b0; overflow: hidden; }
.map { display: block; width: 601px; height: 868px; }
.map path { fill: #ff9e17; stroke: #463a28; stroke-width: 3; stroke-linejoin: round; }
.map .ln { fill: none; }
.map .hole { fill: #fff; }
.map .wood { fill: #a87d42; }

.arrow { position: absolute; left: 348px; top: 683px; }
.ctx { position: absolute; left: 413px; top: 483px; width: 230px; height: 447px; background: #fff; box-shadow: inset 0 0 0 1px #999, 3px 3px 2px -1px #777; }
.mi { height: 23px; display: flex; align-items: center; gap: 5px; padding: 0 0 1px 7px; position: relative; white-space: nowrap; line-height: 22px; letter-spacing: -.34px; }
.ms { height: 2px; margin: 0 5px; border-top: 1px solid #bdbdbd; }
.dis { color: #777; }
.hot { background: #0078d7; color: #e3f0fb; margin: 0 1px; padding-left: 6px; }
.hot .ic { opacity: .8; }
.sub::after { content: ""; position: absolute; right: 5px; top: 7px; border: 4px solid transparent; border-left: 5px solid #555; border-right: 0; }
.redframe { position: absolute; left: 411px; top: 691px; width: 234px; height: 30px; border: 3px solid #ed1c24; }
```
